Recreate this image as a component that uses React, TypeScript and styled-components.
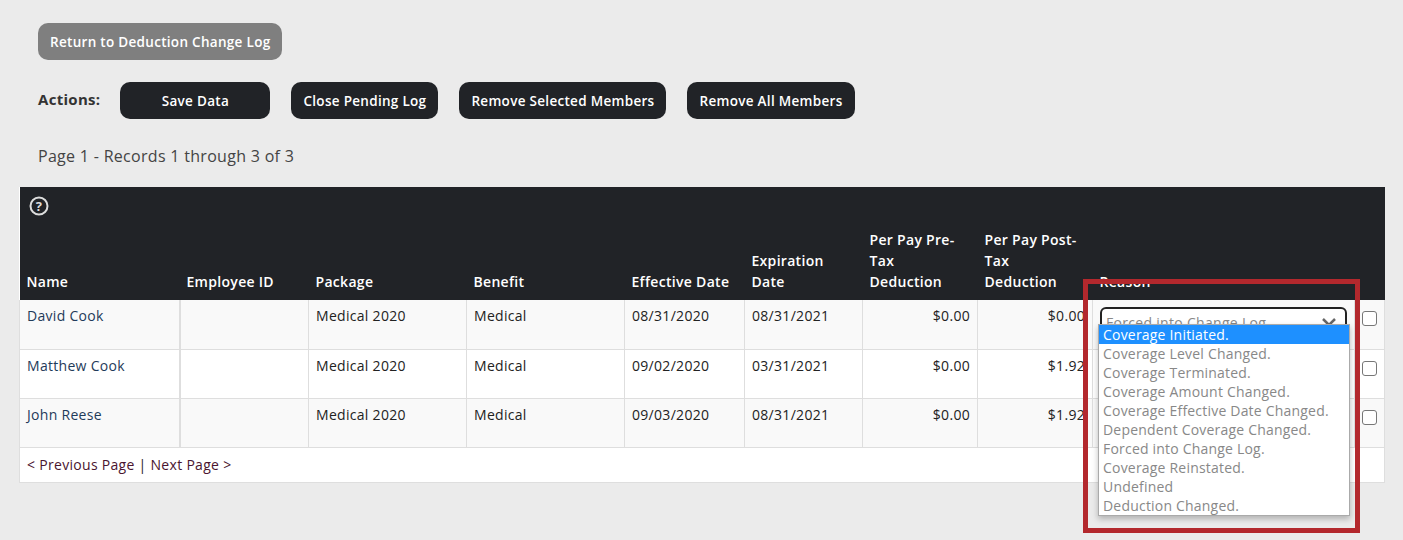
import React from "react";
import styled, { createGlobalStyle } from "styled-components";

const Global = createGlobalStyle`
  html, body { margin: 0; background: #ebebeb; }
  body { font-family: "Open Sans", "Liberation Sans", sans-serif; font-size: 14px; letter-spacing: 0.3px; color: #222; }
`;

const Page = styled.div`
  padding: 23px 19px 0 19px;
  width: 1365px;
  min-height: 560px;
`;

const Top = styled.div`
  padding-left: 19px;
  display: flex;
  flex-direction: column;
  gap: 22px;
`;

const Button = styled.button<{ $grey?: boolean; $w?: number }>`
  height: 37px;
  ${({ $w }) => ($w ? `width: ${$w}px;` : "padding: 0 12px;")}
  border: none;
  border-radius: 10px;
  background: ${({ $grey }) => ($grey ? "#7f7f7f" : "#212327")};
  color: #fff;
  font-family: inherit;
  font-size: 13.5px;
  letter-spacing: 0.3px;
  font-weight: 600;
  cursor: pointer;
`;

const Actions = styled.div`
  display: flex;
  align-items: center;
  gap: 21px;
`;

const Label = styled.span`
  font-weight: 700;
  font-size: 15px;
  color: #333;
  margin-right: -1px;
  margin-top: -4px;
`;

const Records = styled.div`
  font-size: 16px;
  color: #444;
  margin-top: 4px;
  margin-bottom: 20px;
`;

const Wrap = styled.div`
  position: relative;
`;

const Table = styled.table`
  width: 1365px;
  table-layout: fixed;
  border-collapse: collapse;
  background: #fff;
`;

const HelpRow = styled.tr`
  background: #212327;
  td { padding: 0 0 0 9px; height: 42px; vertical-align: middle; }
`;

const Th = styled.th`
  background: #212327;
  color: #fff;
  font-weight: 600;
  text-align: left;
  vertical-align: bottom;
  padding: 0 7px 8px 7px;
  line-height: 21px;
  height: 49px;
  box-sizing: border-box;
`;

const Row = styled.tr<{ $alt?: boolean }>`
  background: ${({ $alt }) => ($alt ? "#fff" : "#f9f9f9")};
  height: 49px;
`;

const Td = styled.td<{ $right?: boolean; $name?: boolean }>`
  border: 1px solid #dedede;
  border-top: none;
  padding: 6px 7px;
  vertical-align: top;
  text-align: ${({ $right }) => ($right ? "right" : "left")};
  color: ${({ $name }) => ($name ? "#1f3b5a" : "#222")};
  white-space: nowrap;
  overflow: hidden;
  &:first-child { border-left: 1px solid #dedede; border-right: 2px solid #dedede; }
`;

const Footer = styled.td`
  border: 1px solid #dedede;
  padding: 7px 7px 8px;
  color: #222;
  a { color: #4a1530; text-decoration: none; }
`;

const Select = styled.div`
  height: 30px;
  border: 2px solid #222;
  border-radius: 6px;
  box-sizing: border-box;
  display: flex;
  align-items: center;
  justify-content: space-between;
  padding: 0 8px 0 4px;
  color: #888;
  background: #fff;
  margin-top: 1px;
`;

const Check = styled.span`
  display: inline-block;
  width: 13px;
  height: 13px;
  border: 1px solid #777;
  border-radius: 3px;
  background: #fff;
  margin-top: 5px;
`;

const List = styled.ul`
  position: absolute;
  left: 1079px;
  top: 137px;
  width: 250px;
  margin: 0;
  padding: 0;
  list-style: none;
  background: #fff;
  border: 1px solid #aaa;
  box-shadow: 0 3px 6px rgba(0,0,0,.25);
  z-index: 2;
`;

const Item = styled.li<{ $on?: boolean }>`
  height: 19px;
  line-height: 19px;
  padding: 0 4px;
  font-size: 14px;
  letter-spacing: 0.2px;
  white-space: nowrap;
  color: ${({ $on }) => ($on ? "#fff" : "#888")};
  background: ${({ $on }) => ($on ? "#1e90ff" : "transparent")};
`;

const Highlight = styled.div`
  position: absolute;
  left: 1064px;
  top: 92px;
  width: 267px;
  height: 244px;
  border: 5px solid #b3282d;
  pointer-events: none;
  z-index: 3;
`;

const rows = [
  { name: "David Cook", eff: "08/31/2020", exp: "08/31/2021", post: "$0.00" },
  { name: "Matthew Cook", eff: "09/02/2020", exp: "03/31/2021", post: "$1.92" },
  { name: "John Reese", eff: "09/03/2020", exp: "08/31/2021", post: "$1.92" },
];

const reasons = [
  "Coverage Initiated.",
  "Coverage Level Changed.",
  "Coverage Terminated.",
  "Coverage Amount Changed.",
  "Coverage Effective Date Changed.",
  "Dependent Coverage Changed.",
  "Forced into Change Log.",
  "Coverage Reinstated.",
  "Undefined",
  "Deduction Changed.",
];

const widths = [160, 129, 158, 158, 120, 118, 115, 115, 262, 30];

const Help = () => (
  <svg width="20" height="20" viewBox="0 0 20 20">
    <circle cx="10" cy="10" r="8.5" fill="none" stroke="#ddd" strokeWidth="2" />
    <text x="10" y="14.5" textAnchor="middle" fontSize="13" fontWeight="700" fill="#ddd" fontFamily="Open Sans, sans-serif">?</text>
  </svg>
);

const Chevron = () => (
  <svg width="16" height="10" viewBox="0 0 16 10">
    <path d="M2 2 L8 8 L14 2" fill="none" stroke="#666" strokeWidth="2.5" />
  </svg>
);

export default function App() {
  return (
    <Page>
      <Global />
      <Top>
        <div><Button $grey>Return to Deduction Change Log</Button></div>
        <Actions>
          <Label>Actions:</Label>
          <Button $w={150}>Save Data</Button>
          <Button>Close Pending Log</Button>
          <Button>Remove Selected Members</Button>
          <Button>Remove All Members</Button>
        </Actions>
        <Records>Page 1 - Records 1 through 3 of 3</Records>
      </Top>
      <Wrap>
        <Table>
          <colgroup>
            {widths.map((w, i) => <col key={i} style={{ width: w }} />)}
          </colgroup>
          <tbody>
            <HelpRow><td colSpan={10}><Help /></td></HelpRow>
            <tr>
              <Th>Name</Th>
              <Th>Employee ID</Th>
              <Th>Package</Th>
              <Th>Benefit</Th>
              <Th>Effective Date</Th>
              <Th>Expiration Date</Th>
              <Th>Per Pay Pre-Tax Deduction</Th>
              <Th>Per Pay Post-Tax Deduction</Th>
              <Th>Reason</Th>
              <Th></Th>
            </tr>
            {rows.map((r, i) => (
              <Row key={r.name} $alt={i === 1}>
                <Td $name>{r.name}</Td>
                <Td></Td>
                <Td>Medical 2020</Td>
                <Td>Medical</Td>
                <Td>{r.eff}</Td>
                <Td>{r.exp}</Td>
                <Td $right>$0.00</Td>
                <Td $right>{r.post}</Td>
                <Td>
                  <Select>Forced into Change Log.<Chevron /></Select>
                </Td>
                <Td><Check /></Td>
              </Row>
            ))}
            <tr>
              <Footer colSpan={10}>
                <a href="#">&lt; Previous Page</a> | <a href="#">Next Page &gt;</a>
              </Footer>
            </tr>
          </tbody>
        </Table>
        <List>
          {reasons.map((r, i) => <Item key={r} $on={i === 0}>{r}</Item>)}
        </List>
        <Highlight />
      </Wrap>
    </Page>
  );
}
